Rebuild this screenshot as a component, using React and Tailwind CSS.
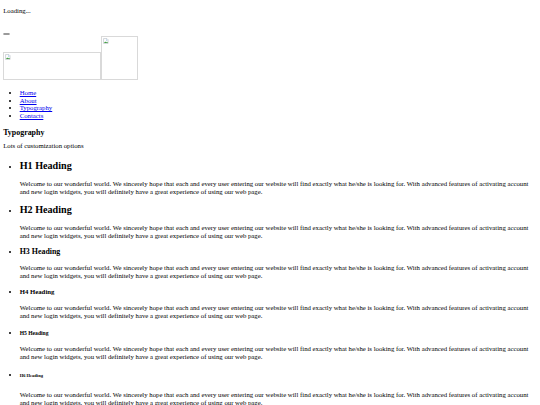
import React from "react";

function BrokenIcon() {
  return (
    <svg width="6" height="6" viewBox="0 0 16 16" className="block">
      <path d="M1.5 1.5h9l3 3v10h-12z" fill="#fff" stroke="#9aa4ad" strokeWidth="1.2" />
      <path d="M2.5 13.5l3.5-4 2.5 2.5 2-2 3 3.5z" fill="#3c9a3c" />
      <circle cx="10" cy="5.5" r="1.4" fill="#4b8fd6" />
    </svg>
  );
}

function BrokenImg({ className }) {
  return (
    <div className={"border border-[#d9d9d9] p-[1px] " + className}>
      <BrokenIcon />
    </div>
  );
}

const text =
  "Welcome to our wonderful world. We sincerely hope that each and every user entering our website will find exactly what he/she is looking for. With advanced features of activating account and new login widgets, you will definitely have a great experience of using our web page.";

const headings = [
  { label: "H1 Heading", cls: "text-[10.15px] leading-[11.7px] mt-[9.7px] mb-[8.1px]" },
  { label: "H2 Heading", cls: "text-[10.15px] leading-[11.7px] mt-[8.2px] mb-[8.1px]" },
  { label: "H3 Heading", cls: "text-[7.92px] leading-[9.2px] mt-[7.4px] mb-[7.4px]" },
  { label: "H4 Heading", cls: "text-[6.76px] leading-[7.8px] mt-[8.1px] mb-[8.1px]" },
  { label: "H5 Heading", cls: "text-[5.62px] leading-[6.5px] mt-[9.6px] mb-[7.9px]" },
  { label: "H6 Heading", cls: "text-[4.53px] leading-[5.2px] mt-[10.5px] mb-[12px]" },
];

export default function App() {
  return (
    <div className="min-h-[405px] overflow-hidden bg-white text-black font-['Liberation_Serif','Times_New_Roman',serif] text-[6.76px] leading-[8px] px-[3.2px] pt-[6.5px]">
      <p>Loading...</p>
      <div className="mt-[18.2px] w-[7px] h-[2.6px] rounded-[1px] border border-[#9a9a9a] bg-[#efefef]" />
      <div className="flex items-end mt-[1px]">
        <BrokenImg className="w-[98px] h-[27.5px]" />
        <BrokenImg className="w-[37px] h-[43.5px]" />
      </div>
      <ul className="list-disc pl-[16.5px] mt-[9.5px] leading-[7.5px]">
        {["Home", "About", "Typography", "Contacts"].map((t) => (
          <li key={t}>
            <a href="#" className="text-[#0000ee] underline">
              {t}
            </a>
          </li>
        ))}
      </ul>
      <h3 className="font-bold text-[7.92px] leading-[9.2px] mt-[9px]">Typography</h3>
      <p className="mt-[4.9px]">Lots of customization options</p>
      <ul className="list-disc pl-[16.5px]">
        {headings.map((h) => (
          <li key={h.label}>
            <div className={"font-bold " + h.cls}>{h.label}</div>
            <p>{text}</p>
          </li>
        ))}
      </ul>
    </div>
  );
}
